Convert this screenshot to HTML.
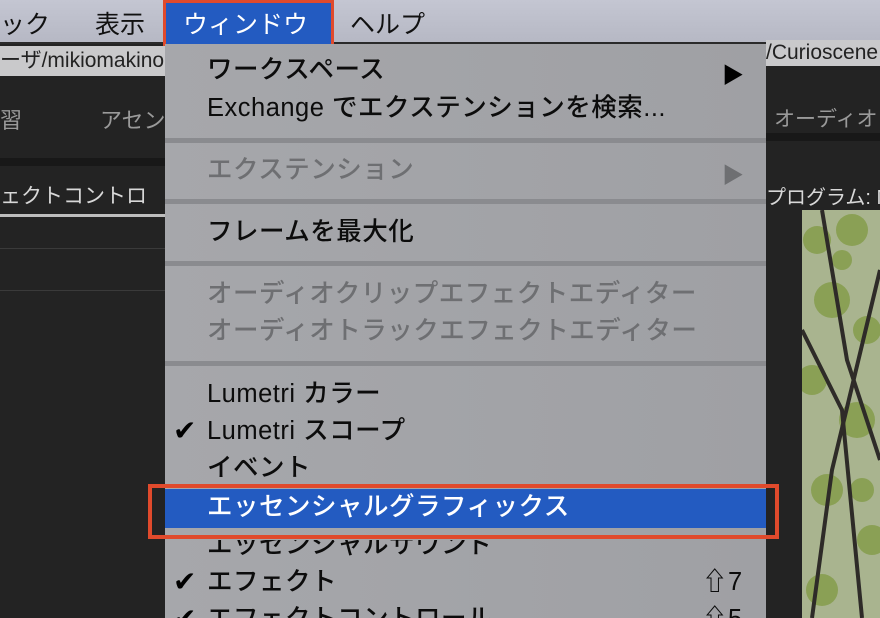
<!DOCTYPE html>
<html><head><meta charset="utf-8"><style>
*{margin:0;padding:0;box-sizing:border-box}
html,body{width:880px;height:618px;overflow:hidden}
body{position:relative;background:#232323;font-family:"Liberation Sans","Noto Sans CJK JP",sans-serif}
.a{position:absolute;white-space:nowrap}
.mb{left:0;top:0;width:880px;height:44px;background:linear-gradient(#c4c6d2,#b6b8c4);border-bottom:2px solid #2a2a2a}
.mt{font-size:25px;color:#111;top:5px}
.menu{left:165px;top:44px;width:601px;height:574px;background:linear-gradient(90deg,#a6a7ab,#9fa0a4)}
.it{left:207px;font-size:25.5px;color:#0c0c0c;line-height:30px;font-weight:500;letter-spacing:0.5px}
.dis{color:#6e6f72}
.sep{left:165px;width:601px;height:5px;background:#8a8b8f}
.ck{left:173px;font-size:28px;color:#000;line-height:30px;font-family:"DejaVu Sans",sans-serif}
</style></head><body>
<div class="a mb"></div>
<div class="a mt" style="left:0">ック</div>
<div class="a mt" style="left:95px">表示</div>
<div class="a mt" style="left:350px">ヘルプ</div>
<div class="a" style="left:163px;top:0;width:171px;height:48px;border:3px solid #e04a2c;background:#235bc1"></div>
<div class="a mt" style="left:183px;color:#fff">ウィンドウ</div>
<div class="a" style="left:0;top:46px;width:170px;height:30px;background:#c9c9cb;color:#222;font-size:21px;line-height:30px">ーザ/mikiomakino</div>
<div class="a" style="left:0;top:103px;color:#9a9a9a;font-size:22px">習</div>
<div class="a" style="left:100px;top:103px;color:#9a9a9a;font-size:22px">アセン</div>
<div class="a" style="left:0;top:158px;width:170px;height:8px;background:#181818"></div>
<div class="a" style="left:0;top:180px;color:#d8d8d8;font-size:21px">ェクトコントロ</div>
<div class="a" style="left:0;top:214px;width:170px;height:3px;background:#bdbdbd"></div>
<div class="a" style="left:0;top:248px;width:170px;height:1px;background:#3a3a3a"></div>
<div class="a" style="left:0;top:290px;width:170px;height:1px;background:#3a3a3a"></div>
<div class="a" style="left:766px;top:40px;width:114px;height:26px;background:#c9c9cb;color:#222;font-size:21px;line-height:26px">/Curioscene</div>
<div class="a" style="left:774px;top:103px;color:#9a9a9a;font-size:21px">オーディオ</div>
<div class="a" style="left:766px;top:133px;width:114px;height:8px;background:#181818"></div>
<div class="a" style="left:766px;top:181px;color:#d8d8d8;font-size:20px">プログラム: M</div>
<svg class="a" style="left:802px;top:210px" width="78" height="408">
<rect width="78" height="408" fill="#a9b48f"/>
<g fill="#8aa055"><circle cx="15" cy="30" r="14"/><circle cx="50" cy="20" r="16"/><circle cx="30" cy="90" r="18"/><circle cx="65" cy="120" r="14"/><circle cx="10" cy="170" r="15"/><circle cx="55" cy="210" r="18"/><circle cx="25" cy="280" r="16"/><circle cx="70" cy="330" r="15"/><circle cx="20" cy="380" r="16"/><circle cx="40" cy="50" r="10"/><circle cx="60" cy="280" r="12"/></g>
<g stroke="#2e2b28" stroke-width="4" fill="none"><path d="M0 120 L40 200 L60 408"/><path d="M78 60 L30 260 L10 408"/><path d="M20 0 L45 150 L78 250"/></g>
</svg>
<div class="a menu"></div>
<div class="a it" style="top:55px">ワークスペース</div>
<div class="a" style="left:722px;top:58px;font-size:22px;color:#000">▶</div>
<div class="a it" style="top:93px">Exchange でエクステンションを検索...</div>
<div class="a sep" style="top:138px"></div>
<div class="a it dis" style="top:155px">エクステンション</div>
<div class="a" style="left:722px;top:158px;font-size:22px;color:#6e6f72">▶</div>
<div class="a sep" style="top:199px"></div>
<div class="a it" style="top:217px">フレームを最大化</div>
<div class="a sep" style="top:261px"></div>
<div class="a it dis" style="top:279px">オーディオクリップエフェクトエディター</div>
<div class="a it dis" style="top:316px">オーディオトラックエフェクトエディター</div>
<div class="a sep" style="top:361px"></div>
<div class="a it" style="top:379px">Lumetri カラー</div>
<div class="a ck" style="top:416px">✔</div>
<div class="a it" style="top:416px">Lumetri スコープ</div>
<div class="a it" style="top:453px">イベント</div>
<div class="a it" style="top:530px;clip-path:inset(10px 0 0 0)">エッセンシャルサウンド</div>
<div class="a" style="left:148px;top:484px;width:631px;height:55px;border:4px solid #e04a2c"></div>
<div class="a" style="left:165px;top:489px;width:601px;height:39px;background:#235bc1"></div>
<div class="a it" style="top:492px;color:#fff">エッセンシャルグラフィックス</div>
<div class="a ck" style="top:567px">✔</div>
<div class="a it" style="top:567px">エフェクト</div>
<div class="a it" style="left:702px;top:567px">⇧7</div>
<div class="a ck" style="top:604px">✔</div>
<div class="a it" style="top:604px">エフェクトコントロール</div>
<div class="a it" style="left:702px;top:604px">⇧5</div>
</body></html>
